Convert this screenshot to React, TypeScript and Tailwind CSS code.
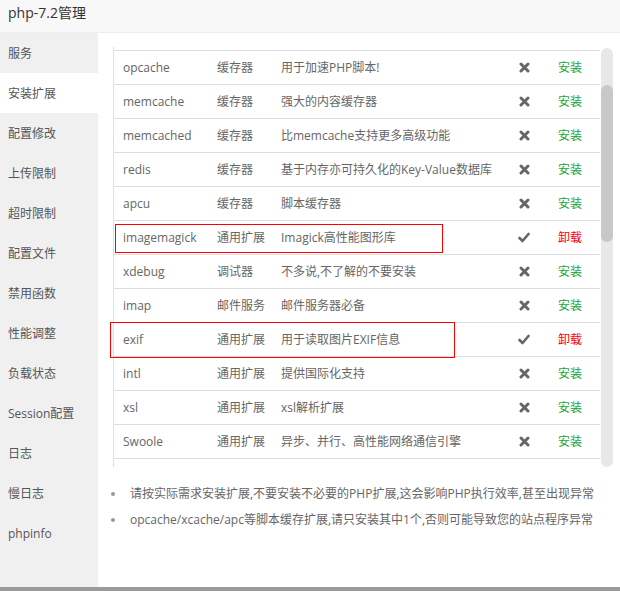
import React from "react";

const menu = [
  "服务",
  "安装扩展",
  "配置修改",
  "上传限制",
  "超时限制",
  "配置文件",
  "禁用函数",
  "性能调整",
  "负载状态",
  "Session配置",
  "日志",
  "慢日志",
  "phpinfo",
];

type Row = { name: string; type: string; desc: string; installed: boolean };

const rows: Row[] = [
  { name: "opcache", type: "缓存器", desc: "用于加速PHP脚本!", installed: false },
  { name: "memcache", type: "缓存器", desc: "强大的内容缓存器", installed: false },
  { name: "memcached", type: "缓存器", desc: "比memcache支持更多高级功能", installed: false },
  { name: "redis", type: "缓存器", desc: "基于内存亦可持久化的Key-Value数据库", installed: false },
  { name: "apcu", type: "缓存器", desc: "脚本缓存器", installed: false },
  { name: "imagemagick", type: "通用扩展", desc: "Imagick高性能图形库", installed: true },
  { name: "xdebug", type: "调试器", desc: "不多说,不了解的不要安装", installed: false },
  { name: "imap", type: "邮件服务", desc: "邮件服务器必备", installed: false },
  { name: "exif", type: "通用扩展", desc: "用于读取图片EXIF信息", installed: true },
  { name: "intl", type: "通用扩展", desc: "提供国际化支持", installed: false },
  { name: "xsl", type: "通用扩展", desc: "xsl解析扩展", installed: false },
  { name: "Swoole", type: "通用扩展", desc: "异步、并行、高性能网络通信引擎", installed: false },
];

function XIcon() {
  return (
    <svg width="11" height="11" viewBox="0 0 11 11">
      <path d="M2 2 L9 9 M9 2 L2 9" stroke="#666" strokeWidth="3" strokeLinecap="round" />
    </svg>
  );
}

function CheckIcon() {
  return (
    <svg width="12" height="11" viewBox="0 0 12 11">
      <path d="M1.5 6 L4.5 9 L10.5 2" stroke="#666" strokeWidth="2.6" fill="none" strokeLinecap="round" strokeLinejoin="round" />
    </svg>
  );
}

export default function App() {
  return (
    <div
      className="relative w-[620px] h-[591px] bg-white flex flex-col overflow-hidden"
      style={{ fontFamily: '"Open Sans", "Noto Sans CJK SC", sans-serif' }}
    >
      <div className="h-[33px] shrink-0 bg-[#f8f8f8] border-b border-[#eeeeee] px-2 text-[14px] leading-[26px] text-[#333]">
        php-7.2管理
      </div>
      <div className="flex flex-1 min-h-0">
        <div className="w-[98px] shrink-0 bg-[#f0f0f0]">
          {menu.map((m, i) => (
            <div
              key={m}
              className={
                "h-10 leading-[42px] pl-2 text-[12px] text-[#555] " +
                (i === 1 ? "bg-white" : "")
              }
            >
              {m}
            </div>
          ))}
        </div>
        <div className="flex-1 flex flex-col pl-[15px] pr-[7px] pt-[14px]">
          <div className="flex h-[420px]">
            <div className="w-[487px] border-l border-[#e0e0e0] pt-[3px] overflow-hidden">
              {rows.map((r) => (
                <div
                  key={r.name}
                  className="flex items-center h-[34px] border-t border-[#dddddd] text-[12px] text-[#666]"
                >
                  <div className="pl-[9px] w-[103px] shrink-0">{r.name}</div>
                  <div className="w-[64px] shrink-0">{r.type}</div>
                  <div className="w-[236px] shrink-0 whitespace-nowrap">{r.desc}</div>
                  <div className="w-[14px] shrink-0 flex justify-center">
                    {r.installed ? <CheckIcon /> : <XIcon />}
                  </div>
                  <div
                    className={
                      "ml-[27px] " + (r.installed ? "text-[#ff0000]" : "text-[#20a53a]")
                    }
                  >
                    {r.installed ? "卸载" : "安装"}
                  </div>
                </div>
              ))}
              <div className="h-[34px] border-t border-[#dddddd]" />
            </div>
            <div className="ml-px w-[12px] h-[419px] mt-px bg-[#e8e8e8] rounded-[6px] relative">
              <div className="absolute left-0 top-[37px] w-[12px] h-[157px] bg-[#c8c8c8] rounded-[6px]" />
            </div>
          </div>
          <ul className="mt-[14px] text-[12px] leading-[26px] text-[#666]">
            <li className="flex items-center">
              <span className="w-[4px] h-[4px] rounded-full bg-[#999] mr-[15px] ml-[-2px]" />
              请按实际需求安装扩展,不要安装不必要的PHP扩展,这会影响PHP执行效率,甚至出现异常
            </li>
            <li className="flex items-center">
              <span className="w-[4px] h-[4px] rounded-full bg-[#999] mr-[15px] ml-[-2px]" />
              opcache/xcache/apc等脚本缓存扩展,请只安装其中1个,否则可能导致您的站点程序异常
            </li>
          </ul>
        </div>
      </div>
      <div className="h-[4px] shrink-0 bg-[#9a9a9a]" />
      <div className="absolute left-[115px] top-[224px] w-[328px] h-[29px] border border-[#ff0000]" />
      <div className="absolute left-[110px] top-[322px] w-[345px] h-[36px] border border-[#ff0000]" />
    </div>
  );
}
